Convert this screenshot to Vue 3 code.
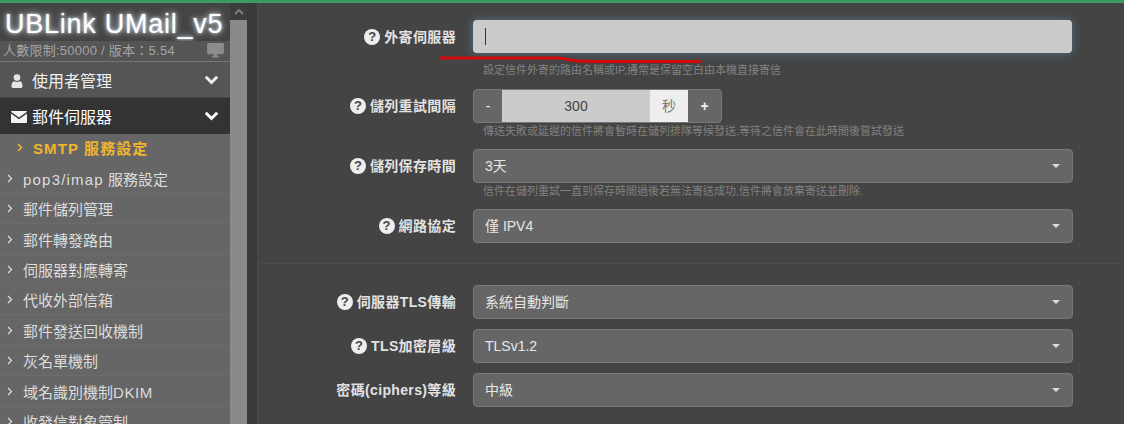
<script setup>
const items = [
  { lat: 'pop3/imap', t: ' 服務設定', h: 30 },
  { t: '郵件儲列管理', h: 30 },
  { t: '郵件轉發路由', h: 31 },
  { t: '伺服器對應轉寄', h: 30 },
  { t: '代收外部信箱', h: 30 },
  { t: '郵件發送回收機制', h: 31 },
  { t: '灰名單機制', h: 30 },
  { t: '域名識別機制', lat2: 'DKIM', h: 31 },
  { t: '收發信對象管制', h: 30 }
]
const rows = [
  { label: '儲列保存時間', q: true, value: '3天', help: '信件在儲列重試一直到保存時間過後若無法寄送成功,信件將會放棄寄送並刪除.', cls: 'r3' },
  { label: '網路協定', q: true, value: '僅 IPV4', cls: 'r4' }
]
const rows2 = [
  { label: '伺服器TLS傳輸', q: true, value: '系統自動判斷', cls: 'r5' },
  { label: 'TLS加密層級', q: true, value: 'TLSv1.2', cls: 'r6' },
  { label: '密碼(ciphers)等級', q: false, value: '中級', cls: 'r7' }
]
</script>

<template>
  <div class="page">
    <aside class="side">
      <div class="brand">UBLink UMail_v5</div>
      <div class="meta">
        <span>人數限制:50000 / 版本：5.54</span>
        <svg class="monitor" width="17" height="15" viewBox="0 0 18 16"><path fill="#8c8c8c" d="M1.5 0h15A1.5 1.5 0 0 1 18 1.500v9a1.500 1.500 0 0 1-1.500 1.500H11v2h2v1.500H5V14h2v-2H1.500A1.500 1.500 0 0 1 0 10.500v-9A1.500 1.500 0 0 1 1.500 0Z"/></svg>
      </div>
      <div class="main-item">
        <svg class="user" width="12" height="14" viewBox="0 0 13 15"><circle cx="6.500" cy="3.800" r="3.600" fill="#e6e6e6"/><path fill="#e6e6e6" d="M0.500 13.500c0-3.500 1-5.500 3-5.800 1.800 1 4.200 1 6 0 2 .3 3 2.300 3 5.800 0 1-.7 1.500-1.500 1.500H2c-.8 0-1.500-.5-1.500-1.500Z"/></svg>
        <span>使用者管理</span>
        <svg class="chev" width="15" height="10" viewBox="0 0 15 10"><path d="M1.800 1.800 7.500 7.500l5.700-5.700" fill="none" stroke="#eee" stroke-width="3"/></svg>
      </div>
      <div class="main-item active">
        <svg class="mail" width="16" height="12" viewBox="0 0 16 12"><path fill="#f2f2f2" d="M1 0h14c.5 0 1 .3 1 .8L8 6.500 0 .8C0 .3.500 0 1 0Zm-1 2.600V11c0 .6.400 1 1 1h14c.6 0 1-.4 1-1V2.600L8 8.300 0 2.600Z"/></svg>
        <span>郵件伺服器</span>
        <svg class="chev" width="15" height="10" viewBox="0 0 15 10"><path d="M1.800 1.800 7.500 7.500l5.700-5.700" fill="none" stroke="#fff" stroke-width="3"/></svg>
      </div>
      <div class="sub current">
        <svg class="gt" width="6" height="9" viewBox="0 0 6 9"><path d="M1 1l3.500 3.500L1 8" fill="none" stroke="#efb52f" stroke-width="1.500"/></svg>
        <span>SMTP 服務設定</span>
      </div>
      <div v-for="i in items" :key="i.t" class="sub" :style="{ height: i.h + 'px' }">
        <svg class="gt" width="6" height="9" viewBox="0 0 6 9"><path d="M1 1l3.500 3.500L1 8" fill="none" stroke="#ddd" stroke-width="1.300"/></svg>
        <span><span v-if="i.lat" class="lat">{{ i.lat }}</span>{{ i.t }}<span v-if="i.lat2" class="lat2">{{ i.lat2 }}</span></span>
      </div>
    </aside>
    <div class="scroll">
      <div class="scroll-up"><svg width="10" height="6" viewBox="0 0 10 6"><path d="M1 5l4-4 4 4" fill="none" stroke="#7e7e7e" stroke-width="2"/></svg></div>
      <div class="scroll-thumb"></div>
    </div>
    <div class="gutter"></div>
    <main class="content">
      <div class="row r1">
        <label class="lab"><span class="q">?</span>外寄伺服器</label>
        <div class="field"><div class="input focus"><i class="caret"></i></div>
          <div class="underline"><svg width="266" height="8" viewBox="0 0 266 8"><path d="M1 2H119c8 0 14 3.500 30 3.500H264" fill="none" stroke="#d40a0a" stroke-width="3"/></svg></div>
          <p class="help first">設定信件外寄的路由名稱或IP,通常是保留空白由本機直接寄信</p>
        </div>
      </div>
      <div class="row r2">
        <label class="lab"><span class="q">?</span>儲列重試間隔</label>
        <div class="field">
          <div class="stepper">
            <span class="st-btn">-</span><span class="st-val">300</span><span class="st-unit">秒</span><span class="st-btn plus">+</span>
          </div>
          <p class="help">傳送失敗或延遲的信件將會暫時在儲列排隊等候發送,等待之信件會在此時間後嘗試發送</p>
        </div>
      </div>
      <div v-for="r in rows" :key="r.label" class="row" :class="r.cls">
        <label class="lab"><span class="q">?</span>{{ r.label }}</label>
        <div class="field">
          <div class="select">{{ r.value }}<i class="arrow"></i></div>
          <p v-if="r.help" class="help">{{ r.help }}</p>
        </div>
      </div>
      <hr class="sep" />
      <div v-for="r in rows2" :key="r.label" class="row" :class="r.cls">
        <label class="lab"><span v-if="r.q" class="q">?</span>{{ r.label }}</label>
        <div class="field">
          <div class="select">{{ r.value }}<i class="arrow"></i></div>
        </div>
      </div>
    </main>
  </div>
</template>

<style>
html, body { margin: 0; background: #444; overflow: hidden; }
</style>

<style scoped>
.page {
  width: 1124px;
  height: 424px;
  box-sizing: border-box;
  border-top: 3px solid #3d9a63;
  background: #444;
  display: flex;
  overflow: hidden;
  font-family: "Liberation Sans", "Noto Sans CJK TC", sans-serif;
}
.side { width: 230px; flex: none; background: #666; overflow: hidden; }
.brand {
  height: 38px;
  box-sizing: border-box;
  background: #444;
  color: #fff;
  font-size: 27px;
  letter-spacing: 0.750px;
  line-height: 42px;
  padding-left: 5px;
  white-space: nowrap;
  font-family: "Liberation Sans", sans-serif;
  text-shadow: 0 0 7px #dbe8f0, 0 0 3px #dbe8f0;
}
.meta {
  height: 20px;
  background: #555;
  color: #a4a4a4;
  font-size: 13px;
  letter-spacing: 0.250px;
  line-height: 20px;
  padding-left: 3px;
  display: flex;
  align-items: center;
  position: relative;
  border-bottom: 1px solid #777;
  white-space: nowrap;
}
.monitor { position: absolute; left: 207px; top: 2px; }
.main-item {
  height: 35px;
  background: #555;
  color: #eee;
  font-size: 16px;
  display: flex;
  align-items: center;
  border-bottom: 1px solid #444;
  position: relative;
  padding-left: 32px;
}
.main-item.active { background: #333; color: #fff; height: 36px; border-bottom: 0; }
.user { position: absolute; left: 11px; top: 12px; }
.mail { position: absolute; left: 11px; top: 13px; }
.chev { position: absolute; left: 204px; top: 13px; }
.sub {
  height: 30px;
  box-sizing: border-box;
  border-bottom: 1px solid #6c6c6c;
  color: #ddd;
  font-size: 15px;
  display: flex;
  align-items: center;
  padding-left: 7px;
  white-space: nowrap;
}
.gt { flex: none; margin-right: 10px; }
.lat { letter-spacing: 1.200px; }
.lat2 { letter-spacing: 0.600px; }
.sub.current {
  height: 30px;
  padding-left: 17px;
  padding-bottom: 3px;
  color: #efb52f;
  font-size: 15px;
  letter-spacing: 1.100px;
  font-weight: 700;
  border-bottom: 0;
}
.scroll { width: 17px; flex: none; background: #8a8a8a; display: flex; flex-direction: column; }
.scroll-up { height: 17px; background: #3c3c3c; display: flex; align-items: center; justify-content: center; }
.scroll-thumb { flex: 1; }
.gutter { width: 10px; flex: none; background: #3a3a3a; border-right: 1px solid #4c4c4c; }
.content { flex: 1; min-width: 0; position: relative; }
.row { display: flex; align-items: flex-start; }
.lab {
  width: 198px;
  flex: none;
  box-sizing: border-box;
  text-align: right;
  color: #e2e2e2;
  font-size: 14px;
  letter-spacing: 0.350px;
  font-weight: 700;
  white-space: nowrap;
  line-height: 34px;
  display: flex;
  justify-content: flex-end;
  align-items: center;
}
.q {
  width: 16px;
  height: 16px;
  border-radius: 50%;
  background: #eee;
  color: #444;
  font-size: 13px;
  font-weight: 700;
  line-height: 16px;
  text-align: center;
  margin-right: 4px;
  flex: none;
  letter-spacing: 0;
}
.field { margin-left: 17px; width: 600px; position: relative; }
.input {
  width: 599px;
  height: 33px;
  background: #cbcbcb;
  border-radius: 4px;
  box-shadow: 0 0 8px 1px rgba(102, 150, 190, 0.45);
  display: flex;
  align-items: center;
  padding-left: 12px;
  box-sizing: border-box;
}
.caret { width: 1px; height: 17px; background: #333; }
.underline { position: absolute; left: -35px; top: 36px; line-height: 0; }
.help {
  margin: 1px 0 0;
  font-size: 11px;
  line-height: 14px;
  color: #828282;
  padding-left: 10px;
  white-space: nowrap;
}
.help.first { margin-top: 10px; }
.stepper {
  width: 249px;
  height: 34px;
  box-sizing: border-box;
  border: 1px solid #777;
  border-radius: 4px;
  display: flex;
  overflow: hidden;
  background: #666;
}
.st-btn { width: 28px; flex: none; color: #eee; font-size: 14px; line-height: 32px; text-align: center; }
.st-btn.plus { width: 33px; font-weight: 700; }
.st-val { width: 148px; background: #cbcbcb; color: #444; font-size: 14px; line-height: 32px; text-align: center; }
.st-unit { width: 38px; background: #eee; color: #777; font-size: 14px; line-height: 32px; text-align: center; }
.select {
  height: 34px;
  box-sizing: border-box;
  background: #666;
  border: 1px solid #777;
  border-radius: 4px;
  color: #e6e6e6;
  font-size: 14px;
  line-height: 32px;
  padding-left: 11px;
  position: relative;
}
.arrow {
  position: absolute;
  right: 12px;
  top: 14px;
  width: 0;
  height: 0;
  border-left: 4px solid transparent;
  border-right: 4px solid transparent;
  border-top: 4px solid #ddd;
}
.sep { margin: 20px 0 21px; border: 0; border-top: 1px solid #4b4b4b; }
.r1 { margin-top: 17px; }
.r2 { margin-top: 12px; }
.r3 { margin-top: 11px; }
.r4 { margin-top: 11px; }
.r6, .r7 { margin-top: 10px; }
</style>
